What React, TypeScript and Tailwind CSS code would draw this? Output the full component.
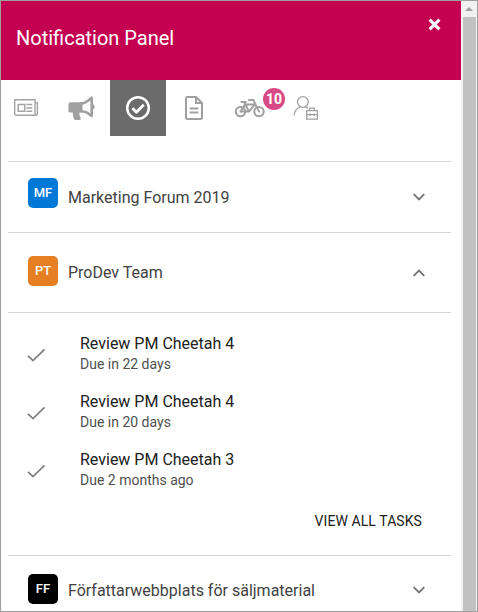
import React from "react";

function NewspaperIcon() {
  return (
    <svg width="26" height="20" viewBox="0 0 26 20" fill="none" stroke="#a3a3a3" strokeWidth="1.400">
      <path d="M22 15.500V1.700H1.700v14a1.600 1.600 0 0 0 1.600 1.600h19.600a1.500 1.500 0 0 0 1.500-1.500V4.600H22M22 15.300a1.600 1.600 0 0 0 1.200 1.900" />
      <path d="M5.200 6.500h6.600v6.800H5.200zM13.400 6.500h5.800M13.400 9.900h5.800M13.400 13.300h5.800" strokeWidth="1.500" />
    </svg>
  );
}

function MegaphoneIcon() {
  return (
    <svg width="28" height="26" viewBox="0 0 28 26" fill="#a0a0a0">
      <path d="M3 7.300h11v10.300h-2.500c-.3 2 .1 3.700 1 5.200.6 1 .2 2.200-.9 2.200H7.600c-.7 0-1.200-.4-1.500-1-1-2-1.500-4.100-1.300-6.400H3A2.600 2.600 0 0 1 .4 15V9.900A2.600 2.600 0 0 1 3 7.300z" />
      <path
        fill="none"
        stroke="#a0a0a0"
        strokeWidth="2.600"
        strokeLinejoin="round"
        d="M13.200 8.600C16 8.300 18.200 7.300 20 5.800L23.700 2.700V21L20 18.200C18.200 17 16 16.500 13.200 16.300z"
      />
      <path d="M24.500 9.300c1.300.2 2.200 1.200 2.200 2.600s-.9 2.300-2.200 2.500z" />
    </svg>
  );
}

function CheckCircleIcon() {
  return (
    <svg width="26" height="26" viewBox="0 0 26 26" fill="none" stroke="#fff">
      <circle cx="13" cy="13" r="10.800" strokeWidth="2.500" />
      <path d="M7.400 13.300l4 4 7.400-7.500" strokeWidth="2.800" strokeLinejoin="round" />
    </svg>
  );
}

function DocumentIcon() {
  return (
    <svg width="20" height="26" viewBox="0 0 20 26" fill="none" stroke="#a0a0a0" strokeWidth="2">
      <path d="M3.200 2h8.800l6 6v14.700a1.300 1.300 0 0 1-1.300 1.300H3.300A1.300 1.300 0 0 1 2 22.700V3.300A1.300 1.300 0 0 1 3.200 2z" />
      <path d="M12 2v6h6M5.600 13.500h8.800M5.600 17.500h8.800" />
    </svg>
  );
}

function BicycleIcon() {
  return (
    <svg width="32" height="22" viewBox="0 0 32 22" fill="none" stroke="#a0a0a0" strokeWidth="2" strokeLinejoin="round">
      <circle cx="6.500" cy="14.600" r="4.700" />
      <circle cx="25" cy="14.600" r="4.700" />
      <path d="M6.500 14.600l4.500-7.100h9.700L15 14.600H6.500M15 14.600L10.300 5.200M7.400 5h4.600M25 14.600L19.300 3h-4.300" strokeLinecap="round" />
    </svg>
  );
}

function PersonBriefcaseIcon() {
  return (
    <svg width="26" height="26" viewBox="0 0 26 26" fill="none" stroke="#a0a0a0" strokeWidth="1.300">
      <circle cx="9.900" cy="7" r="5.400" />
      <path d="M1.200 20.300c.2-4.300 2.400-7.100 6-8.200M12.600 12.100c1.300.3 1.800.6 2.300 1.200" />
      <path d="M13.700 15.700h10.700v8.500H13.700zM16.800 15.500v-2.400h4.500v2.400M13.700 19.700h10.700M17 18.500v2.600M21.200 18.500v2.600" />
    </svg>
  );
}

function Chevron({ open = false }: { open?: boolean }) {
  return (
    <svg className={open ? "rotate-180" : "-mt-[3px]"} width="12" height="8" viewBox="0 0 12 8" fill="none" stroke="#737373" strokeWidth="1.800">
      <path d="M.7 1.200L6 6.400l5.300-5.200" />
    </svg>
  );
}

function Tab({ active = false, children }: { active?: boolean; children: React.ReactNode }) {
  return (
    <button className={`relative flex h-14 w-14 shrink-0 items-center justify-center ${active ? "bg-[#6b6b6b]" : ""}`}>
      {children}
    </button>
  );
}

interface GroupProps {
  initials: string;
  title: string;
  color: string;
  size: string;
  textOffset: string;
  open?: boolean;
}

function Group({ initials, title, color, size, textOffset, open }: GroupProps) {
  return (
    <div className={`flex items-start border-t border-[#d6d6d6] pr-[26px] pl-5 ${size}`}>
      <div className={`flex h-[30px] w-[30px] shrink-0 items-center justify-center rounded-[5px] text-[13px] font-medium text-white ${color}`}>
        {initials}
      </div>
      <div className={`flex h-6 flex-1 items-center justify-between pl-[10px] ${textOffset}`}>
        <span className="whitespace-nowrap text-base text-[#424242]">{title}</span>
        <Chevron open={open} />
      </div>
    </div>
  );
}

const tasks = [
  { title: "Review PM Cheetah 4", due: "Due in 22 days" },
  { title: "Review PM Cheetah 4", due: "Due in 20 days" },
  { title: "Review PM Cheetah 3", due: "Due 2 months ago" },
];

export default function App() {
  return (
    <div className="flex h-[612px] w-[478px] overflow-hidden border border-[#a0a0a0] bg-white font-['Roboto',sans-serif]">
      <main className="w-[460px] shrink-0 overflow-hidden">
        <header className="flex h-[79px] items-start justify-between bg-[#c40050] pr-5 pl-[15px] text-white">
          <h1 className="mt-[23px] text-xl leading-7">Notification Panel</h1>
          <button className="mt-[17px]">
            <svg width="13" height="13" viewBox="0 0 13 13" stroke="white" strokeWidth="3">
              <path d="M1.600 1.600l9.800 9.800M11.400 1.600L1.600 11.400" />
            </svg>
          </button>
        </header>
        <nav className="-ml-[3px] flex h-[81px]">
          <Tab><NewspaperIcon /></Tab>
          <Tab><MegaphoneIcon /></Tab>
          <Tab active><CheckCircleIcon /></Tab>
          <Tab><DocumentIcon /></Tab>
          <Tab>
            <BicycleIcon />
            <span className="absolute top-2 left-[41px] flex h-[22px] w-[22px] items-center justify-center rounded-full bg-[#d84a86] text-sm font-bold text-white">
              10
            </span>
          </Tab>
          <Tab><PersonBriefcaseIcon /></Tab>
        </nav>
        <div className="mr-[10px] ml-[7px]">
          <Group initials="MF" title="Marketing Forum 2019" color="bg-[#0078d7]" size="h-[71px] pt-4" textOffset="mt-2" />
          <Group initials="PT" title="ProDev Team" color="bg-[#e67e22]" size="h-20 pt-[23px]" textOffset="mt-[5px]" open />
          <section className="h-[243px] border-t border-[#d6d6d6] pt-5">
            {tasks.map((task, i) => (
              <div key={i} className="flex h-[58px] pl-[19px]">
                <svg className="mt-[15px] shrink-0" width="19" height="15" viewBox="0 0 19 15" fill="none" stroke="#808080" strokeWidth="1.800">
                  <path d="M1 7.800l5 4.800L17.500 1.300" />
                </svg>
                <div className="pl-[34px]">
                  <div className="text-base leading-[22px] text-[#212121]">{task.title}</div>
                  <div className="text-sm leading-[18px] text-[#505050]">{task.due}</div>
                </div>
              </div>
            ))}
            <div className="flex justify-end pt-[4px] pr-[29px]">
              <button className="text-sm leading-5 tracking-[0.08px] text-[#212121]">VIEW ALL TASKS</button>
            </div>
          </section>
          <Group initials="FF" title="Författarwebbplats för säljmaterial" color="bg-black" size="h-[70px] pt-[18px]" textOffset="mt-[5px]" />
        </div>
      </main>
      <aside className="flex w-4 shrink-0 flex-col bg-[#f1f1f1]">
        <div className="flex h-4 items-center justify-center">
          <svg width="8" height="4" viewBox="0 0 8 4" fill="#a0a0a0"><path d="M0 4l4-4 4 4z" /></svg>
        </div>
        <div className="mr-px ml-[2px] flex-1 bg-[#c1c1c1]" />
      </aside>
    </div>
  );
}
